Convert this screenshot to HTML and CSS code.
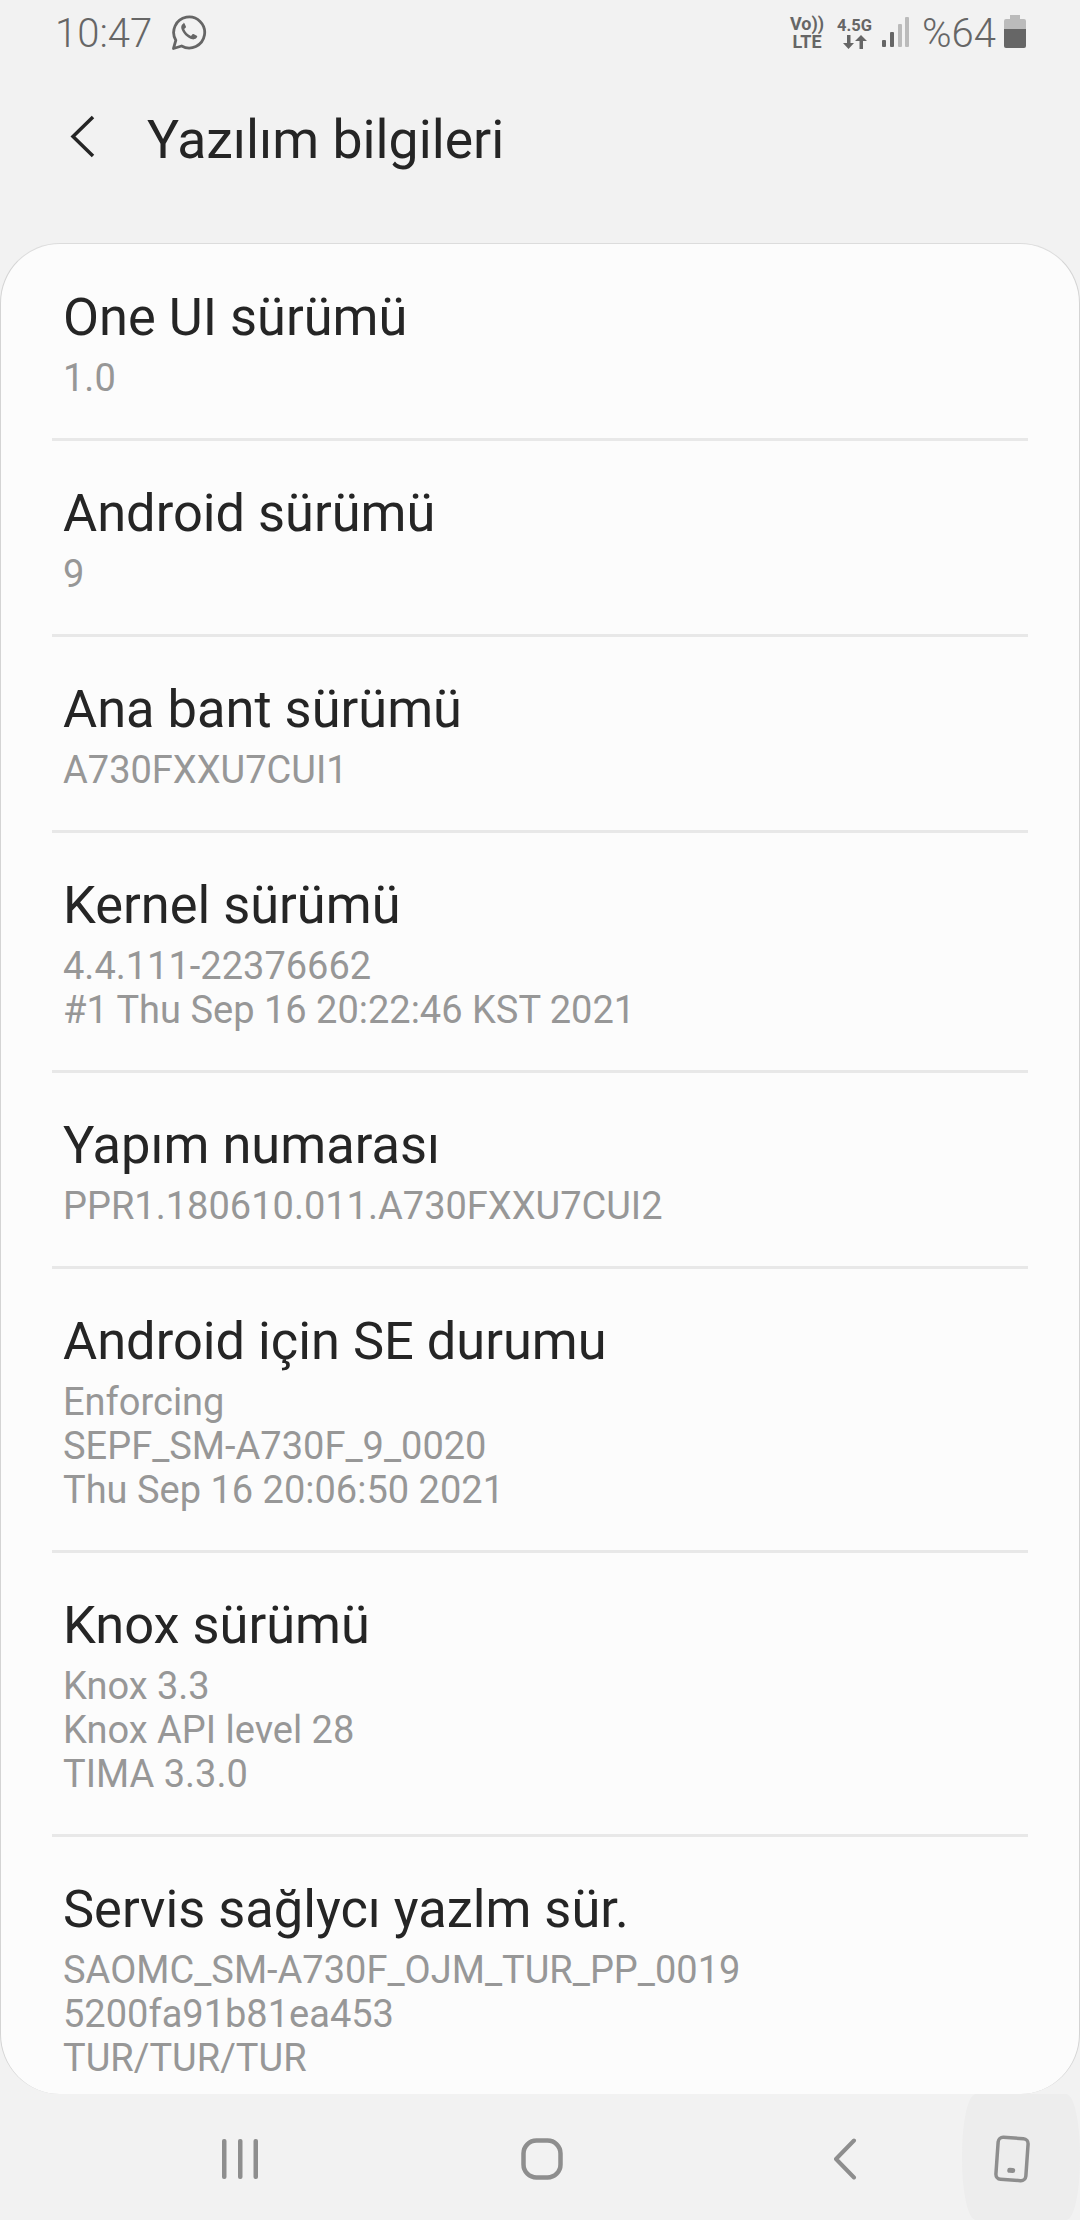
FILE: index.html
```html
<!DOCTYPE html>
<html lang="tr">
<head>
    <meta charset="UTF-8">
    <meta name="viewport" content="width=device-width, initial-scale=1.0">
    <title>Yazılım bilgileri</title>
    <link rel="stylesheet" href="styles.css">
</head>
<body>
    <div class="status-bar">
        <div class="status-left">
            <span class="clock">10:47</span>
            <svg class="whatsapp" width="36" height="36" viewBox="0 0 36 36" fill="none">
                <path d="M2.500 34.500l2.300-8.200A15.500 15.500 0 1 1 10.600 32z" stroke="#666" stroke-width="2.800" stroke-linejoin="round"/>
                <path d="M12.500 9.500c-1.500.8-2.600 2.600-2.200 4.800 1 4.700 6.300 10 11 11 2.200.4 4-.7 4.800-2.200.3-.6.200-1-.3-1.300l-3.300-1.700c-.5-.2-.8-.1-1.200.3l-1.300 1.500c-3-1-5.600-3.600-6.800-6.800l1.400-1.300c.4-.4.500-.7.300-1.200l-1.500-3.300c-.2-.6-.5-.7-.9-.6z" fill="#666"/>
            </svg>
        </div>
        <div class="status-right">
            <div class="net-label">
                <span>Vo))</span>
                <span>LTE</span>
            </div>
            <div class="net-label net-data">
                <span>4.5G</span>
                <svg width="24" height="14" viewBox="0 0 24 14" fill="#666">
                    <path d="M4 0h3.500v8H11l-5.500 6L0 8h4zM18 0l6 6h-4v8h-3.500V6H12z"/>
                </svg>
            </div>
            <svg class="signal" width="27" height="30" viewBox="0 0 27 30">
                <rect x="0" y="23" width="4" height="7" rx="1" fill="#666"/>
                <rect x="8" y="15" width="4" height="15" rx="1" fill="#666"/>
                <rect x="16" y="7" width="4" height="23" rx="1" fill="#bbb"/>
                <rect x="23" y="0" width="4" height="30" rx="1" fill="#bbb"/>
            </svg>
            <span class="battery-text">%64</span>
            <svg class="battery" width="22" height="33" viewBox="0 0 22 33">
                <path d="M6 0h10v4h4a2 2 0 0 1 2 2v8H0V6a2 2 0 0 1 2-2h4z" fill="#bbb"/>
                <path d="M0 14h22v17a2 2 0 0 1-2 2H2a2 2 0 0 1-2-2z" fill="#666"/>
            </svg>
        </div>
    </div>

    <div class="toolbar">
        <svg class="back-icon" width="28" height="44" viewBox="0 0 28 44" fill="none">
            <path d="M26 2L6 21.500 26 41" stroke="#252525" stroke-width="3.500"/>
        </svg>
        <h1 class="page-title">Yazılım bilgileri</h1>
    </div>

    <div class="card">
        <div class="row">
            <div class="row-title">One UI sürümü</div>
            <div class="row-value">1.0</div>
        </div>
        <div class="row">
            <div class="row-title">Android sürümü</div>
            <div class="row-value">9</div>
        </div>
        <div class="row">
            <div class="row-title">Ana bant sürümü</div>
            <div class="row-value">A730FXXU7CUI1</div>
        </div>
        <div class="row">
            <div class="row-title">Kernel sürümü</div>
            <div class="row-value">4.4.111-22376662<br>#1 Thu Sep 16 20:22:46 KST 2021</div>
        </div>
        <div class="row">
            <div class="row-title">Yapım numarası</div>
            <div class="row-value">PPR1.180610.011.A730FXXU7CUI2</div>
        </div>
        <div class="row">
            <div class="row-title">Android için SE durumu</div>
            <div class="row-value">Enforcing<br>SEPF_SM-A730F_9_0020<br>Thu Sep 16 20:06:50 2021</div>
        </div>
        <div class="row">
            <div class="row-title">Knox sürümü</div>
            <div class="row-value">Knox 3.3<br>Knox API level 28<br>TIMA 3.3.0</div>
        </div>
        <div class="row">
            <div class="row-title">Servis sağlycı yazlm sür.</div>
            <div class="row-value">SAOMC_SM-A730F_OJM_TUR_PP_0019<br>5200fa91b81ea453<br>TUR/TUR/TUR</div>
        </div>
    </div>

    <div class="nav-bar">
        <svg width="36" height="40" viewBox="0 0 36 40" fill="#8e8e8e">
            <rect x="0" y="0" width="4.500" height="40" rx="2"/>
            <rect x="16" y="0" width="4.500" height="40" rx="2"/>
            <rect x="31.500" y="0" width="4.500" height="40" rx="2"/>
        </svg>
        <svg width="42" height="42" viewBox="0 0 42 42" fill="none">
            <rect x="2.500" y="2.500" width="37" height="37" rx="13" stroke="#8e8e8e" stroke-width="4.500"/>
        </svg>
        <svg width="24" height="42" viewBox="0 0 24 42" fill="none">
            <path d="M21 2.500L3 21l18 18.500" stroke="#8e8e8e" stroke-width="4" stroke-linecap="round" stroke-linejoin="round"/>
        </svg>
        <div class="rotate-btn">
            <svg width="38" height="48" viewBox="0 0 38 48" fill="none">
                <rect x="4" y="3" width="30" height="42" rx="5" transform="rotate(4 19 24)" stroke="#8e8e8e" stroke-width="3.500"/>
                <rect x="15" y="33" width="8" height="5" rx="2.500" transform="rotate(4 19 24)" fill="#8e8e8e"/>
            </svg>
        </div>
    </div>
</body>
</html>
```

FILE: styles.css
```css
* {
    box-sizing: border-box;
}

body {
    margin: 0;
    width: 1080px;
    height: 2220px;
    display: flex;
    flex-direction: column;
    font-family: Roboto, 'Noto Sans', sans-serif;
    background-color: #f2f2f2;
    overflow: hidden;
}

/* Status bar */
.status-bar {
    height: 66px;
    flex-shrink: 0;
    display: flex;
    justify-content: space-between;
    align-items: center;
    padding: 0 54px 0 55px;
    color: #666;
}

.status-left,
.status-right {
    display: flex;
    align-items: center;
}

.clock {
    font-size: 40px;
    font-weight: 300;
}

.whatsapp {
    margin: 0 0 3px 19px;
}

.net-label {
    display: flex;
    flex-direction: column;
    align-items: center;
    font-size: 18px;
    font-weight: 700;
    line-height: 18px;
    margin-right: 13px;
}

.net-data {
    font-size: 16.500px;
    margin-right: 10px;
}

.signal {
    margin: 0 13px 3px 0;
}

.battery-text {
    font-size: 40px;
    font-weight: 300;
    margin-right: 8px;
}

.battery {
    margin-bottom: 3px;
}

/* Toolbar */
.toolbar {
    height: 177px;
    flex-shrink: 0;
    display: flex;
    align-items: flex-start;
    padding: 44px 0 0 67px;
}

.back-icon {
    margin-top: 5px;
}

.page-title {
    margin: 0 0 0 52px;
    font-size: 53.500px;
    font-weight: 400;
    line-height: 60px;
    color: #252525;
}

/* Card with the list */
.card {
    height: 1851px;
    flex-shrink: 0;
    overflow: hidden;
    background-color: #fcfcfc;
    border-top: 1px solid #dcdcdc;
    border-left: 1px solid #d4d4d4;
    border-right: 1px solid #d4d4d4;
    border-radius: 60px;
    padding: 1px 51px 0;
}

.row {
    padding: 33px 11px 38px;
    border-bottom: 3px solid #e8e8e8;
}

.row:last-child {
    border-bottom: none;
}

.row-title {
    font-size: 52.400px;
    line-height: 78px;
    color: #252525;
}

.row-value {
    font-size: 38px;
    line-height: 44px;
    color: #979797;
}

/* Navigation bar */
.nav-bar {
    position: relative;
    height: 126px;
    flex-shrink: 0;
    display: grid;
    grid-template-columns: repeat(3, 302.500px);
    justify-content: center;
    justify-items: center;
    align-items: center;
    padding: 3px 0 0 4px;
}

.rotate-btn {
    position: absolute;
    top: 0;
    right: 0;
    width: 118px;
    height: 126px;
    display: flex;
    align-items: center;
    justify-content: center;
    padding: 3px 18px 0 0;
    background-color: #ededed;
    border-radius: 14px / 60px;
}
```
